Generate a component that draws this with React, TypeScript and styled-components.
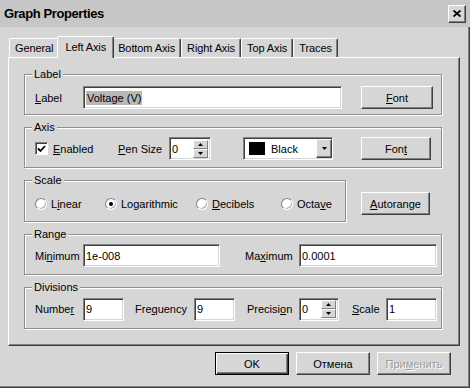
import styled, { createGlobalStyle } from "styled-components";

const GlobalStyle = createGlobalStyle`
  html, body {
    margin: 0;
    padding: 0;
    background: #d6d6d6;
  }
  body {
    font-family: "Liberation Sans", Arial, sans-serif;
    font-size: 11px;
    color: #000;
  }
`;

const Window = styled.div`
  width: 470px;
  height: 388px;
  box-sizing: border-box;
  background: #d6d6d6;
  display: flex;
  flex-direction: column;
  box-shadow: inset -1px -1px 0 #404040, inset -2px -2px 0 #808080;
  overflow: hidden;
`;

const TitleBar = styled.div`
  height: 27px;
  flex-shrink: 0;
  display: flex;
  align-items: center;
  justify-content: space-between;
  padding: 0 4px 0 4px;
  background: #c6c6c6;
`;

const Title = styled.span`
  font-weight: bold;
  font-size: 13px;
  letter-spacing: -0.4px;
`;

const CloseButton = styled.div`
  width: 18px;
  height: 18px;
  box-sizing: border-box;
  display: flex;
  align-items: center;
  justify-content: center;
  background: #d6d6d6;
  border: 1px solid;
  border-color: #fff #404040 #404040 #fff;
  box-shadow: inset -1px -1px 0 #808080;
`;

const TabStrip = styled.div`
  display: flex;
  align-items: flex-end;
  height: 22px;
  margin-top: 8px;
  padding-left: 9px;
  flex-shrink: 0;
  letter-spacing: -0.1px;
`;

const Tab = styled.div<{ $active?: boolean }>`
  position: relative;
  box-sizing: border-box;
  height: ${(p) => (p.$active ? "22px" : "19px")};
  margin: ${(p) => (p.$active ? "0 -2px -1px -2px" : "0")};
  padding: ${(p) => (p.$active ? "0 7px 2px" : "0 5px")};
  z-index: ${(p) => (p.$active ? 1 : 0)};
  display: flex;
  align-items: center;
  background: #d6d6d6;
  border-top: 1px solid #fff;
  border-left: 1px solid #fff;
  border-right: 1px solid #404040;
  border-radius: 2px 2px 0 0;
  box-shadow: inset -1px 0 0 #808080;
  white-space: nowrap;
`;

const Panel = styled.div`
  height: 289px;
  box-sizing: border-box;
  margin: 0 10px 0 8px;
  padding: 10px 17px 0 15px;
  border: 1px solid;
  border-color: #fff #404040 #404040 #fff;
  box-shadow: inset -1px -1px 0 #808080;
  display: flex;
  flex-direction: column;
  gap: 6px;
  flex-shrink: 0;
`;

const Group = styled.fieldset<{ $pt: number; $pb: number; $w?: number }>`
  margin: 0;
  min-width: 0;
  width: ${(p) => (p.$w ? `${p.$w}px` : "auto")};
  box-sizing: border-box;
  padding: ${(p) => `${p.$pt}px 8px ${p.$pb}px 10px`};
  border: 1px solid #8e8e8e;
  box-shadow: inset 1px 1px 0 #fff, 1px 1px 0 #fff;
`;

const Legend = styled.legend`
  margin-left: -3px;
  padding: 0 2px;
  line-height: 13px;
  background: #d6d6d6;
`;

const Row = styled.div<{ $h?: number }>`
  display: flex;
  align-items: center;
  height: ${(p) => p.$h ?? 23}px;
`;

const Caption = styled.span<{ $w: number }>`
  width: ${(p) => p.$w}px;
  flex-shrink: 0;
  white-space: nowrap;
`;

const Field = styled.div<{ $w: number; $ml?: number }>`
  width: ${(p) => p.$w}px;
  margin-left: ${(p) => p.$ml ?? 0}px;
  height: 23px;
  box-sizing: border-box;
  flex-shrink: 0;
  display: flex;
  align-items: center;
  padding-left: 2px;
  background: #fff;
  border: 1px solid;
  border-color: #808080 #fff #fff #808080;
  box-shadow: inset 1px 1px 0 #404040, inset -1px -1px 0 #d6d6d6;
  white-space: nowrap;
  overflow: hidden;
`;

const Selected = styled.span`
  background: #b8b8b8;
  padding: 1px 1px;
`;

const SpinBox = styled(Field)`
  padding-right: 2px;
  justify-content: space-between;
`;

const SpinButtons = styled.div`
  display: flex;
  flex-direction: column;
  width: 15px;
  height: 18px;
`;

const SpinHalf = styled.div`
  flex: 1;
  display: flex;
  align-items: center;
  justify-content: center;
  background: #d6d6d6;
  border: 1px solid;
  border-color: #fff #808080 #808080 #fff;
`;

const Button = styled.div<{ $w: number; $ml?: number; $default?: boolean; $disabled?: boolean }>`
  width: ${(p) => p.$w}px;
  margin-left: ${(p) => p.$ml ?? 0}px;
  height: 23px;
  box-sizing: border-box;
  flex-shrink: 0;
  display: flex;
  align-items: center;
  justify-content: center;
  background: #d6d6d6;
  border: 1px solid;
  border-color: ${(p) => (p.$default ? "#000" : "#fff #404040 #404040 #fff")};
  box-shadow: ${(p) =>
    p.$default
      ? "inset 1px 1px 0 #fff, inset -1px -1px 0 #404040, inset -2px -2px 0 #808080"
      : "inset -1px -1px 0 #808080"};
  color: ${(p) => (p.$disabled ? "#9c9c9c" : "#000")};
  text-shadow: ${(p) => (p.$disabled ? "1px 1px 0 #fff" : "none")};
  white-space: nowrap;
`;

const CheckBox = styled.div`
  width: 13px;
  height: 13px;
  box-sizing: border-box;
  background: #fff;
  border: 1px solid;
  border-color: #808080 #fff #fff #808080;
  box-shadow: inset 1px 1px 0 #404040;
  display: flex;
  align-items: center;
  justify-content: center;
  margin-right: 5px;
`;

const Check = styled.label<{ $w: number }>`
  width: ${(p) => p.$w}px;
  flex-shrink: 0;
  display: flex;
  align-items: center;
`;

const Radio = styled.label<{ $w?: number }>`
  width: ${(p) => (p.$w ? `${p.$w}px` : "auto")};
  flex-shrink: 0;
  display: flex;
  align-items: center;
  white-space: nowrap;
`;

const RadioDot = styled.span<{ $on?: boolean }>`
  width: 12px;
  height: 12px;
  box-sizing: border-box;
  border-radius: 50%;
  margin-right: 4px;
  background: #fff;
  border: 1px solid;
  border-color: #808080 #fff #fff #808080;
  box-shadow: -1px -1px 0 #aaa inset;
  display: flex;
  align-items: center;
  justify-content: center;
  &::after {
    content: "";
    width: 4px;
    height: 4px;
    border-radius: 50%;
    background: ${(p) => (p.$on ? "#000" : "transparent")};
  }
`;

const Swatch = styled.span`
  width: 16px;
  height: 13px;
  background: #000;
  margin: 0 6px 0 3px;
`;

const DropButton = styled.div`
  margin-left: auto;
  width: 16px;
  height: 19px;
  box-sizing: border-box;
  display: flex;
  align-items: center;
  justify-content: center;
  background: #d6d6d6;
  border: 1px solid;
  border-color: #fff #404040 #404040 #fff;
  box-shadow: inset -1px -1px 0 #808080;
`;

const ScaleRow = styled.div`
  display: flex;
  align-items: flex-end;
`;

const ButtonRow = styled.div`
  display: flex;
  justify-content: flex-end;
  gap: 7px;
  padding: 6px 19px 0 0;
`;

const U = styled.span`
  text-decoration: underline;
`;

const Arrow = ({ up }: { up?: boolean }) => (
  <svg width="5" height="3" viewBox="0 0 5 3">
    <path d={up ? "M2.5 0 L5 3 L0 3 Z" : "M0 0 L5 0 L2.5 3 Z"} fill="#000" />
  </svg>
);

const Spinner = ({ w, ml, value }: { w: number; ml?: number; value: string }) => (
  <SpinBox $w={w} $ml={ml}>
    {value}
    <SpinButtons>
      <SpinHalf>
        <Arrow up />
      </SpinHalf>
      <SpinHalf>
        <Arrow />
      </SpinHalf>
    </SpinButtons>
  </SpinBox>
);

export default function App() {
  return (
    <Window>
      <GlobalStyle />
      <TitleBar>
        <Title>Graph Properties</Title>
        <CloseButton>
          <svg width="8" height="7" viewBox="0 0 8 7">
            <path d="M0.5 0.5 L7.5 6.5 M7.5 0.5 L0.5 6.5" stroke="#000" strokeWidth="1.8" />
          </svg>
        </CloseButton>
      </TitleBar>

      <TabStrip>
        <Tab>General</Tab>
        <Tab $active>Left Axis</Tab>
        <Tab>Bottom Axis</Tab>
        <Tab>Right Axis</Tab>
        <Tab>Top Axis</Tab>
        <Tab>Traces</Tab>
      </TabStrip>

      <Panel>
        <Group $pt={5} $pb={5}>
          <Legend>Label</Legend>
          <Row>
            <Caption $w={48}>
              <U>L</U>abel
            </Caption>
            <Field $w={259}>
              <Selected>Voltage (V)</Selected>
            </Field>
            <Button $w={72} $ml={19}>
              <U>F</U>ont
            </Button>
          </Row>
        </Group>

        <Group $pt={3} $pb={7}>
          <Legend>Axis</Legend>
          <Row>
            <Check $w={83}>
              <CheckBox>
                <svg width="9" height="8" viewBox="0 0 9 8">
                  <path d="M1 3.5 L3.5 6 L8 1" stroke="#000" strokeWidth="1.8" fill="none" />
                </svg>
              </CheckBox>
              <span>
                <U>E</U>nabled
              </span>
            </Check>
            <Caption $w={51}>
              <U>P</U>en Size
            </Caption>
            <Spinner w={42} value="0" />
            <Field $w={90} $ml={32}>
              <Swatch />
              Black
              <DropButton>
                <Arrow />
              </DropButton>
            </Field>
            <Button $w={70} $ml={28}>
              Fon<U>t</U>
            </Button>
          </Row>
        </Group>

        <ScaleRow>
          <Group $pt={5} $pb={6} $w={322}>
            <Legend>Scale</Legend>
            <Row>
              <Radio $w={70}>
                <RadioDot />
                L<U>i</U>near
              </Radio>
              <Radio $w={91}>
                <RadioDot $on />
                Logarithmic
              </Radio>
              <Radio $w={85}>
                <RadioDot />
                <U>D</U>ecibels
              </Radio>
              <Radio>
                <RadioDot />
                Octa<U>v</U>e
              </Radio>
            </Row>
          </Group>
          <Button $w={69} $ml={15} style={{ marginBottom: 7 }}>
            <U>A</U>utorange
          </Button>
        </ScaleRow>

        <Group $pt={3} $pb={7}>
          <Legend>Range</Legend>
          <Row>
            <Caption $w={48}>
              Mi<U>n</U>imum
            </Caption>
            <Field $w={137}>1e-008</Field>
            <Caption $w={54} style={{ marginLeft: 25 }}>
              Ma<U>x</U>imum
            </Caption>
            <Field $w={138}>0.0001</Field>
          </Row>
        </Group>

        <Group $pt={3} $pb={7}>
          <Legend>Divisions</Legend>
          <Row $h={24}>
            <Caption $w={48}>
              Numbe<U>r</U>
            </Caption>
            <Field $w={41}>9</Field>
            <Caption $w={59} style={{ marginLeft: 11 }}>
              Fre<U>q</U>uency
            </Caption>
            <Field $w={41}>9</Field>
            <Caption $w={52} style={{ marginLeft: 12 }}>
              Precisi<U>o</U>n
            </Caption>
            <Spinner w={40} value="0" />
            <Caption $w={34} style={{ marginLeft: 13 }}>
              <U>S</U>cale
            </Caption>
            <Field $w={51}>1</Field>
          </Row>
        </Group>
      </Panel>

      <ButtonRow>
        <Button $w={74} $default>
          OK
        </Button>
        <Button $w={74}>Отмена</Button>
        <Button $w={74} $disabled>
          При<U>м</U>енить
        </Button>
      </ButtonRow>
    </Window>
  );
}
